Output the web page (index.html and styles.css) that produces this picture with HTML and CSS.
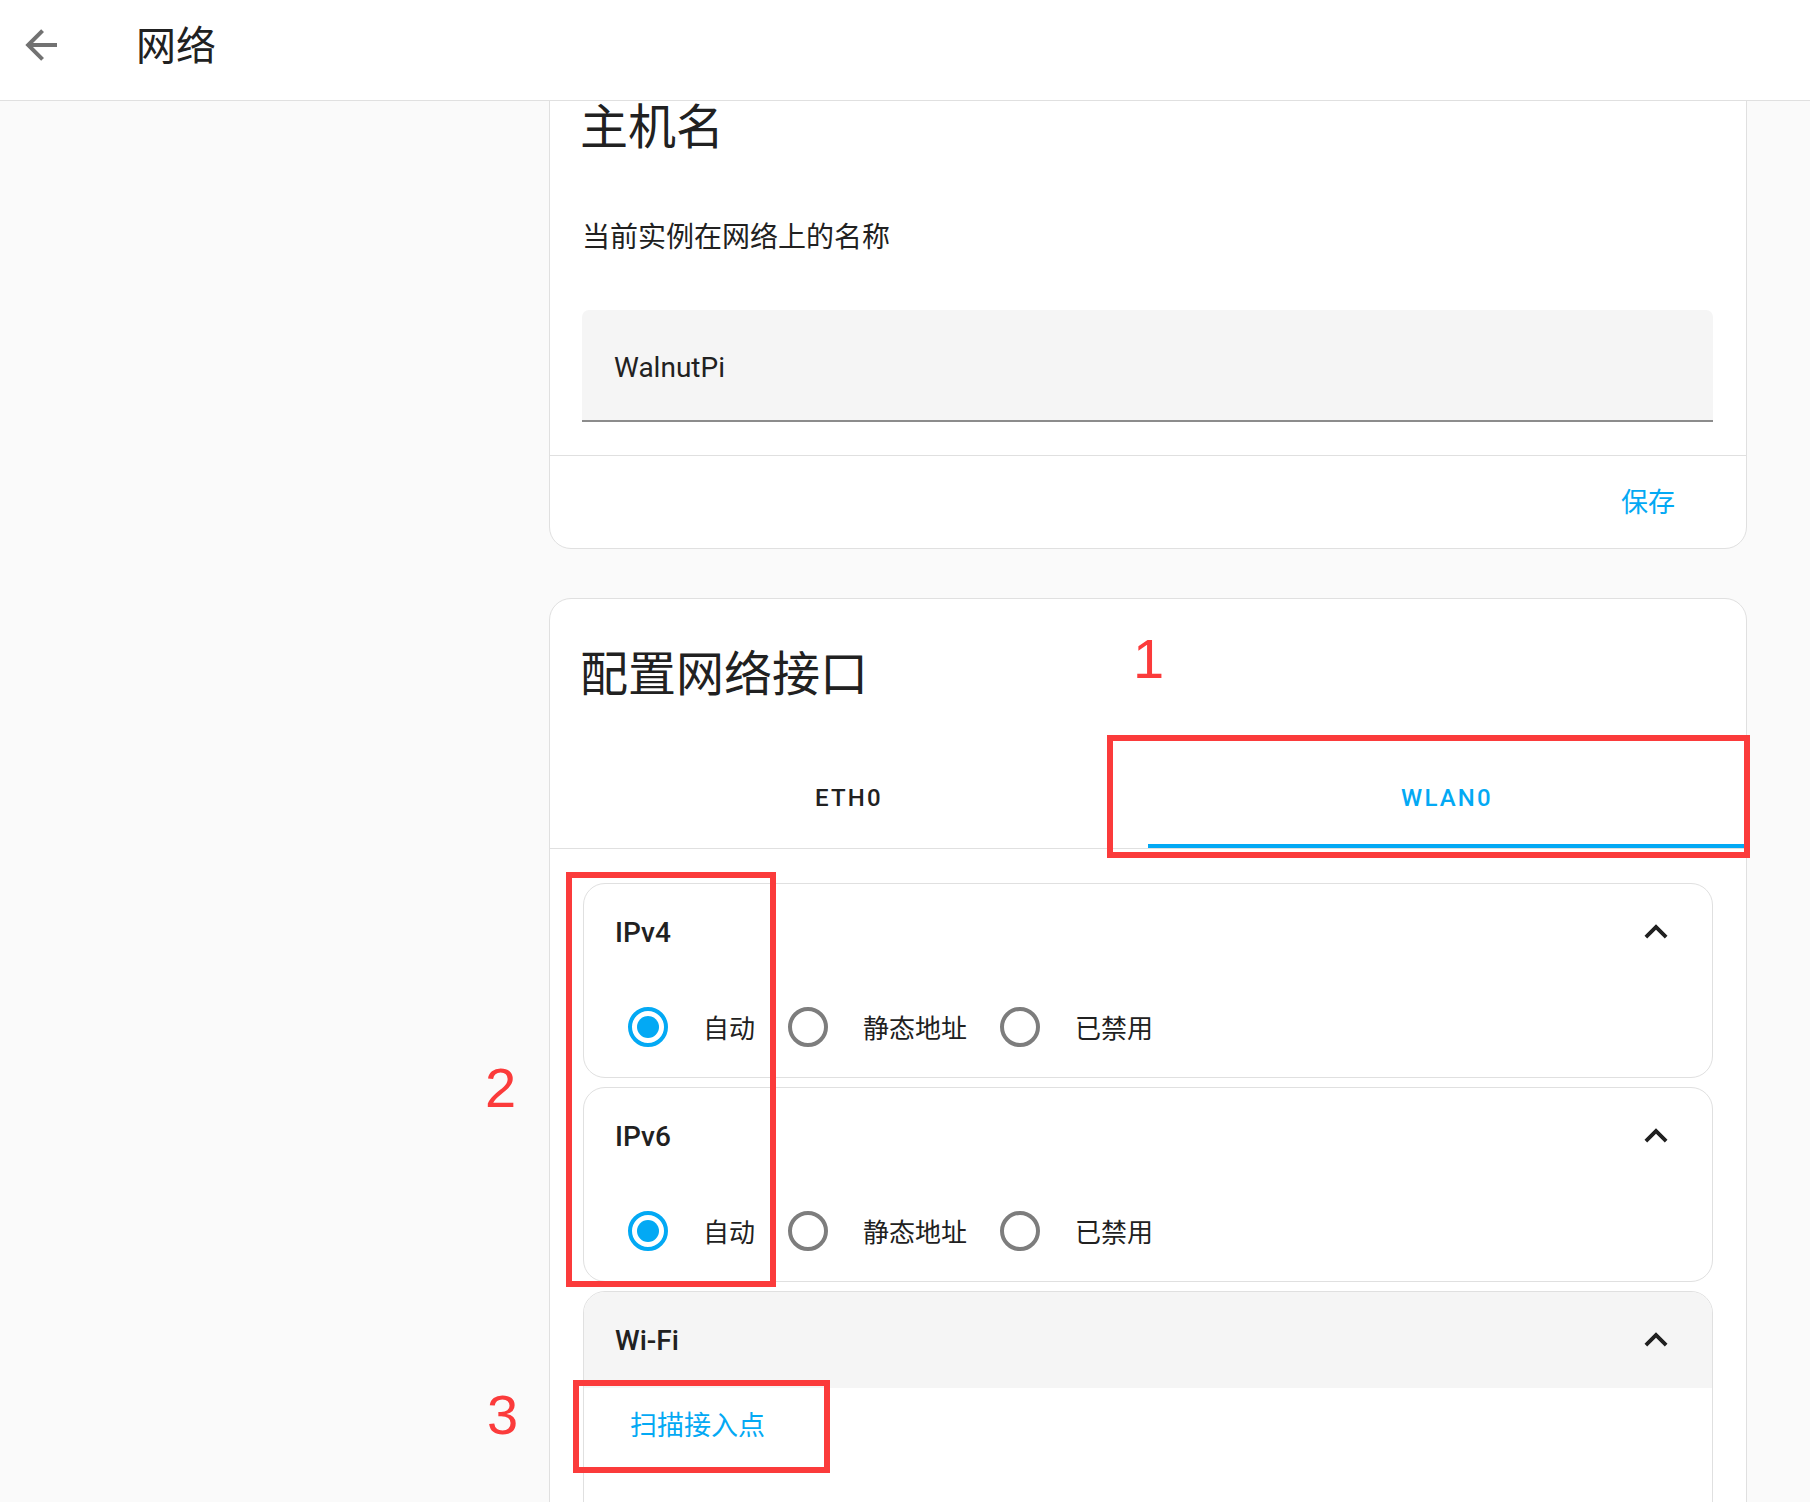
FILE: index.html
```html
<!DOCTYPE html>
<html lang="zh-CN">
<head>
  <meta charset="utf-8">
  <title>网络</title>
  <link rel="stylesheet" href="styles.css">
</head>
<body>
  <header class="toolbar">
    <button class="back-button" aria-label="返回">
      <svg viewBox="0 0 24 24"><path d="M20,11V13H8L13.5,18.5L12.08,19.92L4.16,12L12.08,4.08L13.5,5.5L8,11H20Z"/></svg>
    </button>
    <div class="toolbar-title">网络</div>
  </header>

  <div class="page">
    <div class="side"></div>
    <div class="cards">
      <div class="card hostname-card">
        <h2 class="card-title">主机名</h2>
        <div class="card-content">
          <p class="card-desc">当前实例在网络上的名称</p>
          <div class="text-field">WalnutPi</div>
        </div>
        <div class="card-actions">
          <button class="text-button">保存</button>
        </div>
      </div>

      <div class="card network-card">
        <h2 class="card-title">配置网络接口</h2>
        <div class="tabs">
          <div class="tab">eth0</div>
          <div class="tab active">wlan0</div>
        </div>
        <div class="panels">
          <div class="panel">
            <div class="panel-header">
              <span>IPv4</span>
              <svg class="chevron" viewBox="0 0 24 24"><path d="M7.41,15.41L12,10.83L16.59,15.41L18,14L12,8L6,14L7.41,15.41Z"/></svg>
            </div>
            <div class="radio-group">
              <div class="option"><span class="radio checked"></span><span>自动</span></div>
              <div class="option"><span class="radio"></span><span>静态地址</span></div>
              <div class="option"><span class="radio"></span><span>已禁用</span></div>
            </div>
          </div>
          <div class="panel">
            <div class="panel-header">
              <span>IPv6</span>
              <svg class="chevron" viewBox="0 0 24 24"><path d="M7.41,15.41L12,10.83L16.59,15.41L18,14L12,8L6,14L7.41,15.41Z"/></svg>
            </div>
            <div class="radio-group">
              <div class="option"><span class="radio checked"></span><span>自动</span></div>
              <div class="option"><span class="radio"></span><span>静态地址</span></div>
              <div class="option"><span class="radio"></span><span>已禁用</span></div>
            </div>
          </div>
          <div class="panel wifi-panel">
            <div class="panel-header">
              <span>Wi-Fi</span>
              <svg class="chevron" viewBox="0 0 24 24"><path d="M7.41,15.41L12,10.83L16.59,15.41L18,14L12,8L6,14L7.41,15.41Z"/></svg>
            </div>
            <div class="panel-content">
              <button class="text-button">扫描接入点</button>
            </div>
          </div>
        </div>
      </div>
    </div>
  </div>

  <!-- annotations drawn over the screenshot -->
  <div class="mark-num num-1">1</div>
  <div class="mark-num num-2">2</div>
  <div class="mark-num num-3">3</div>
  <div class="mark-box box-tab"></div>
  <div class="mark-box box-ip"></div>
  <div class="mark-box box-scan"></div>
</body>
</html>
```

FILE: styles.css
```css
body {
  margin: 0;
  height: 100vh;
  overflow: hidden;
  background-color: #fafafa;
  color: #212121;
  font-family: Roboto, "Noto Sans CJK SC", sans-serif;
}
button {
  font-family: inherit;
  border: none;
  background: none;
  padding: 0;
  cursor: pointer;
}

.toolbar {
  display: flex;
  align-items: center;
  height: 90px;
  padding-bottom: 10px;
  background-color: #fff;
  border-bottom: 1px solid #e0e0e0;
}
.back-button {
  width: 48px;
  height: 48px;
  margin-left: 17px;
}
.back-button svg {
  width: 48px;
  height: 48px;
  fill: #727272;
  display: block;
}
.toolbar-title {
  margin: 0 0 4px 71px;
  font-size: 40px;
}

.page {
  display: grid;
  grid-template-columns: 549px 1198px;
  height: calc(100vh - 101px);
  overflow: hidden;
}

.card {
  background-color: #fff;
  border: 1px solid #e0e0e0;
  border-radius: 22px;
}
.hostname-card {
  margin-top: -30px;
}
.network-card {
  margin-top: 49px;
}
.card-title {
  margin: 0;
  padding: 31px 34px 0 30px;
  font-size: 48px;
  font-weight: 400;
  line-height: 50px;
}
.network-card .card-title {
  padding-top: 51px;
}
.card-content {
  padding: 65px 33px 33px 32px;
}
.card-desc {
  margin: 0;
  font-size: 28px;
  line-height: 40px;
}
.text-field {
  display: flex;
  align-items: center;
  height: 106px;
  margin-top: 52px;
  padding: 4px 0 0 32px;
  background-color: #f5f5f5;
  border-bottom: 2px solid #8c8c8c;
  border-radius: 7px 7px 0 0;
  font-size: 28px;
}
.card-actions {
  display: flex;
  justify-content: flex-end;
  align-items: center;
  height: 88px;
  padding: 0 41px 4px 0;
  border-top: 1px solid #e0e0e0;
}
.text-button {
  height: 68px;
  padding: 0 30px;
  color: #03a9f4;
  font-size: 27px;
}

.tabs {
  display: flex;
  margin-top: 52px;
  border-bottom: 1px solid #e0e0e0;
}
.tab {
  flex: 1;
  display: flex;
  align-items: center;
  justify-content: center;
  height: 92px;
  border-bottom: 4px solid transparent;
  font-size: 24px;
  font-weight: 500;
  letter-spacing: 2.2px;
  text-transform: uppercase;
}
.tab.active {
  color: #03a9f4;
  border-bottom-color: #03a9f4;
}

.panels {
  display: flex;
  flex-direction: column;
  gap: 9px;
  padding: 34px 33px 0;
}
.panel {
  border: 1px solid #e0e0e0;
  border-radius: 22px;
  overflow: hidden;
}
.panel-header {
  display: flex;
  justify-content: space-between;
  align-items: center;
  height: 96px;
  padding: 0 33px 0 31px;
  font-size: 28px;
  font-weight: 500;
}
.chevron {
  width: 46px;
  height: 46px;
  fill: #212121;
}
.radio-group {
  display: flex;
  align-items: center;
  height: 93px;
  padding: 0 0 4px 44px;
  font-size: 26px;
}
.option {
  display: flex;
  align-items: center;
  gap: 35px;
  margin-right: 33px;
}
.radio {
  display: flex;
  align-items: center;
  justify-content: center;
  box-sizing: border-box;
  width: 40px;
  height: 40px;
  border: 4px solid #7d7d7d;
  border-radius: 50%;
}
.radio.checked {
  border-color: #03a9f4;
}
.radio.checked::after {
  content: "";
  width: 22px;
  height: 22px;
  border-radius: 50%;
  background-color: #03a9f4;
}
.wifi-panel .panel-header {
  background-color: #f5f5f5;
}
.panel-content {
  padding: 1px 16px 120px;
}

.mark-num {
  position: absolute;
  color: #fb3b3b;
  font-family: "Liberation Sans", Arial, sans-serif;
  font-size: 56px;
  line-height: 56px;
}
.num-1 { left: 1133px; top: 631px; }
.num-2 { left: 485px; top: 1060px; }
.num-3 { left: 487px; top: 1387px; }
.mark-box {
  position: absolute;
  box-sizing: border-box;
  border: 6px solid #fb3b3b;
}
.box-tab { left: 1107px; top: 735px; width: 643px; height: 123px; }
.box-ip { left: 566px; top: 872px; width: 210px; height: 415px; }
.box-scan { left: 573px; top: 1380px; width: 257px; height: 93px; }
```
